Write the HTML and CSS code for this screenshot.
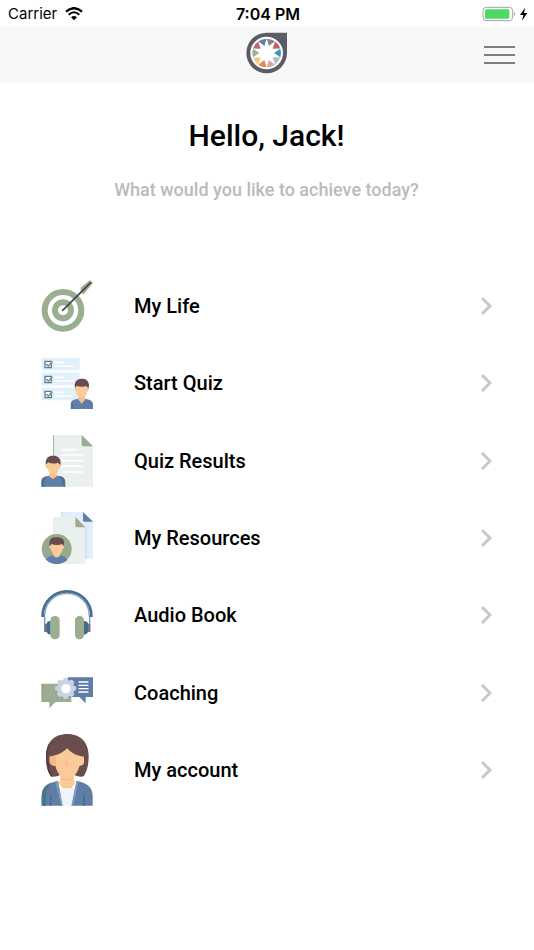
FILE: index.html
```html
<!DOCTYPE html>
<html lang="en">
<head>
<meta charset="utf-8">
<meta name="viewport" content="width=device-width, initial-scale=1">
<title>Home</title>
<link rel="stylesheet" href="styles.css">
</head>
<body>
<div class="status">
  <div class="status-left">
    <span>Carrier</span>
    <svg width="18" height="14" viewBox="0 0 54 42" aria-hidden="true"><path d="M3 14Q27-7 51 14" fill="none" stroke="#000" stroke-width="7"/><path d="M11 23Q27 9 43 23" fill="none" stroke="#000" stroke-width="6"/><path d="M18 31Q27 23 36 31L27 40z"/></svg>
  </div>
  <time class="clock">7:04 PM</time>
  <div class="status-right">
    <svg width="46" height="16" viewBox="0 0 138 48" aria-hidden="true"><rect x="3" y="4" width="89" height="40" rx="10" fill="#fff" stroke="#a2a2a4" stroke-width="3"/><rect x="9" y="10" width="73" height="28" rx="3" fill="#4cd964"/><path d="M97 18q6 6 0 12z" fill="#8e8e93"/><path d="M129 5L114 27h10l-4 17 16-23h-10z"/></svg>
  </div>
</div>
<header class="bar">
  <a class="logo" href="#" aria-label="Home">
    <svg width="42" height="42" viewBox="0 0 126 126" aria-hidden="true">
      <path d="M62 2h61v61A61 61 0 1 1 62 2z" fill="#5c5c68"/>
      <circle cx="62" cy="63" r="49" fill="#fff"/>
      <g transform="translate(62 63)">
        <path d="M22 0L41-13Q45 0 41 13z" fill="#2b9fbc"/>
        <path d="M22 0L41-13Q45 0 41 13z" fill="#b9bbbc" transform="rotate(36)"/>
        <path d="M22 0L41-13Q45 0 41 13z" fill="#dfa0ac" transform="rotate(72)"/>
        <path d="M22 0L41-13Q45 0 41 13z" fill="#e9874e" transform="rotate(108)"/>
        <path d="M22 0L41-13Q45 0 41 13z" fill="#fbc778" transform="rotate(144)"/>
        <path d="M22 0L41-13Q45 0 41 13z" fill="#9db397" transform="rotate(180)"/>
        <path d="M22 0L41-13Q45 0 41 13z" fill="#b76a7c" transform="rotate(216)"/>
        <path d="M22 0L41-13Q45 0 41 13z" fill="#5f7ea9" transform="rotate(252)"/>
        <path d="M22 0L41-13Q45 0 41 13z" fill="#85868b" transform="rotate(288)"/>
        <path d="M22 0L41-13Q45 0 41 13z" fill="#cb5962" transform="rotate(324)"/>
      </g>
    </svg>
  </a>
  <button class="menu-button" type="button" aria-label="Menu"><span class="line"></span><span class="line"></span><span class="line"></span></button>
</header>
<main class="content">
  <h1 class="title">Hello, Jack!</h1>
  <p class="subtitle">What would you like to achieve today?</p>
  <nav class="menu">
    <a class="item" href="#">
      <svg class="icon" viewBox="33 30 156 156" aria-hidden="true"><g fill="none" stroke="#9aae90"><circle cx="99" cy="121" r="55" stroke-width="18"/><circle cx="99" cy="121" r="24" stroke-width="18"/></g><path d="M152 70V53l29-24 1 7 7-1-3 8-24 28z" fill="#9aae90"/><path d="M98 121L182 38" stroke="#45434f" stroke-width="5" stroke-linecap="round"/></svg>
      <span class="label">My Life</span>
      <svg class="chevron" viewBox="0 0 12 20" aria-hidden="true"><path d="M2 2l8 8-8 8"/></svg>
    </a>
    <a class="item" href="#">
      <svg class="icon" viewBox="33 22 156 156" aria-hidden="true"><g fill="#e1f0fa"><path d="M35 24h114v38H35zM35 69h114v38H35zM35 114h114v38H35z"/></g><path d="M45 35h19v19H45zM45 80h19v19H45zM45 125h19v19H45z" fill="#fff" stroke="#5d7ba4" stroke-width="4"/><path d="M75 38h28M75 49h55M75 83h28M75 94h55M75 128h28M75 139h49" stroke="#fff" stroke-width="5" stroke-linecap="round"/><path d="M49 43l6 7 12-14M49 88l6 7 12-14M49 133l6 7 12-14" fill="none" stroke="#829b79" stroke-width="5"/><path d="M122 178v-12c0-11 5-15 16-17l17-3 17 3c11 2 17 7 17 17v12z" fill="#607ea8"/><path d="M127 178v-14" stroke="#416b8b" stroke-width="4"/><path d="M145 137h20v13l-10 12-10-12z" fill="#f4bf8b"/><path d="M134 109c0-16 9-22 22-22 14 0 21 8 21 22l-3 14h-37z" fill="#674b4e"/><path d="M134 114q5-2 6-6 14 6 29 1 2 5 7 6-1 8-4 10-3 20-17 20t-17-20q-4-4-4-11z" fill="#facb98"/></svg>
      <span class="label">Start Quiz</span>
      <svg class="chevron" viewBox="0 0 12 20" aria-hidden="true"><path d="M2 2l8 8-8 8"/></svg>
    </a>
    <a class="item" href="#">
      <svg class="icon" viewBox="33 24 156 156" aria-hidden="true"><path d="M69 24h86l34 34v121H69z" fill="#eaf0ee"/><path d="M69 24h3v90h-3z" fill="#a5b59f"/><path d="M155 24l34 34h-29q-5 0-5-5z" fill="#9bad91"/><path d="M97 68h42M97 84h62M97 101h62M97 118h62M101 135h58" stroke="#fff" stroke-width="5" stroke-linecap="round"/><path d="M34 179v-14c0-12 7-16 19-18l16-3 18 3c12 2 19 7 19 18v14z" fill="#607ea8"/><path d="M35 179v-14q0-14 14-17-6 5-6 14v17zM96 165q0-12-9-18 17 1 18 18v14h-4z" fill="#49758a"/><path d="M58 134h22v15l-11 7-11-7z" fill="#f4bf8b"/><path d="M47 109c0-16 8-23 22-23s23 7 23 23l-2 12H48z" fill="#674b4e"/><path d="M47 112q6-2 7-6 15 7 30 1 2 5 8 6-1 7-5 10-4 20-17 20-13 0-18-20-4-3-5-11z" fill="#facb98"/></svg>
      <span class="label">Quiz Results</span>
      <svg class="chevron" viewBox="0 0 12 20" aria-hidden="true"><path d="M2 2l8 8-8 8"/></svg>
    </a>
    <a class="item" href="#">
      <svg class="icon" viewBox="33 25 156 156" aria-hidden="true"><path d="M94 25h65l30 29v111H94z" fill="#e1effc"/><path d="M94 25h3v15h-3z" fill="#bfd0e5"/><path d="M159 25l30 29h-26q-4 0-4-4z" fill="#627eaa"/><path d="M165 68h5v97h-5z" fill="#c9dced"/><path d="M69 40h67l30 31v111H69z" fill="#eaf0ee"/><path d="M136 40l30 31h-26q-4 0-4-4z" fill="#9bad91"/><circle cx="80" cy="136" r="45" fill="#96aa8d"/><path d="M48 168c3-9 14-11 25-13h14c12 2 22 4 25 14q-13 12-32 12-18 0-32-13z" fill="#607ea8"/><path d="M70 142h20v15q-10 9-20 0z" fill="#f4bf8b"/><path d="M58 122c0-17 8-22 23-21 15 0 23 6 21 22l-3 9H61z" fill="#674b4e"/><path d="M57 128q7-2 7-7 17 6 33 0 1 6 6 7-1 7-5 9-4 20-18 20-13 0-17-20-5-2-6-9z" fill="#facb98"/></svg>
      <span class="label">My Resources</span>
      <svg class="chevron" viewBox="0 0 12 20" aria-hidden="true"><path d="M2 2l8 8-8 8"/></svg>
    </a>
    <a class="item" href="#">
      <svg class="icon" viewBox="33 23 156 156" aria-hidden="true"><path d="M44 107v43M179 107v43" stroke="#7d98b4" stroke-width="4"/><path d="M43 127h12v25H43zM168 127h13v25h-13z" fill="#77777d"/><path d="M38 107v-4a73 73 0 0 1 146 0v4" fill="none" stroke="#426f93" stroke-width="8"/><path d="M44 107v-4a67 67 0 0 1 134 0v4" fill="none" stroke="#8099ba" stroke-width="4"/><path d="M62 119q-12 0-12 10v20q0 10 12 11zM161 119q13 0 13 10v20q0 10-13 11z" fill="#41698e"/><rect x="61" y="104" width="28" height="70" rx="13" fill="#9bae91"/><rect x="135" y="104" width="27" height="70" rx="13" fill="#9bae91"/></svg>
      <span class="label">Audio Book</span>
      <svg class="chevron" viewBox="0 0 12 20" aria-hidden="true"><path d="M2 2l8 8-8 8"/></svg>
    </a>
    <a class="item" href="#">
      <svg class="icon icon-short" viewBox="33 36 156 96" aria-hidden="true"><path d="M35 56h89v55H76l-18 19v-19H35z" fill="#9aad91"/><path d="M35 56h3v55h-3z" fill="#839e7a"/><path d="M113 37h76v59h-22v19l-19-19h-35z" fill="#607da8"/><path d="M147 51h27M147 61h27M147 71h27M147 81h27" stroke="#fff" stroke-width="4" stroke-linecap="round"/><g stroke="#c9d3e4" stroke-width="16" stroke-linecap="round"><path d="M107 46v48M83 70h48M90 53l34 34M90 87l34-34"/></g><circle cx="107" cy="70" r="26" fill="#c9d3e4"/><circle cx="108" cy="71" r="14" fill="#fff"/></svg>
      <span class="label">Coaching</span>
      <svg class="chevron" viewBox="0 0 12 20" aria-hidden="true"><path d="M2 2l8 8-8 8"/></svg>
    </a>
    <a class="item" href="#">
      <svg class="icon icon-tall" viewBox="33 19 156 216" aria-hidden="true"><path d="M112 19c-42 0-64 27-64 67 0 25 4 45 14 60 12 3 23-1 32-6h36c9 5 19 9 31 6 10-15 15-35 15-60 0-41-23-67-64-67z" fill="#6b4c4f"/><path d="M60 43q-12 17-12 43 0 38 14 60l6 1q-13-26-14-61 0-25 6-43z" fill="#5b3f43"/><path d="M92 138h39v25l-7 20H99l-7-20z" fill="#f5be88"/><path d="M80 181h62v53H80z" fill="#f0f3fa"/><path d="M35 234v-28c0-32 22-40 49-47l13 75zM188 234v-28c0-32-20-40-48-47l-14 75z" fill="#607da5"/><path d="M35 234v-28q0-33 31-42-18 12-18 42v28z" fill="#47758d"/><path d="M62 203v31M162 203v31" stroke="#42698f" stroke-width="4" stroke-linecap="round"/><path d="M84 160l14 74h-5l-17-72zM139 160l-15 74h5l17-71z" fill="#7c9abd"/><path d="M88 158h46v10q-5 14-23 14-18 0-23-14z" fill="#facb98"/><path d="M59 87c20-3 38-10 52-25 15 16 31 23 51 25v18q-2 9-13 9-7 24-24 37-13 7-27-1-16-11-22-36-14 1-17-10z" fill="#facb98"/><path d="M59 87q11-1 20-5-2 16 1 32-18 2-21-10z" fill="#f4bb83"/><path d="M108 98v14h7" fill="none" stroke="#eab37d" stroke-width="3"/></svg>
      <span class="label">My account</span>
      <svg class="chevron" viewBox="0 0 12 20" aria-hidden="true"><path d="M2 2l8 8-8 8"/></svg>
    </a>
  </nav>
</main>
</body>
</html>
```
FILE: styles.css
```css
* {
  box-sizing: border-box;
}

body {
  margin: 0;
  background: #fff;
  color: #000;
  font-family: Roboto, "Liberation Sans", sans-serif;
}

svg {
  display: block;
}

.status,
.bar {
  display: grid;
  grid-template-columns: 1fr auto 1fr;
  align-items: center;
}

.status {
  height: 26px;
  padding: 0 6px 0 8px;
  font-family: Inter, "Liberation Sans", sans-serif;
  font-size: 15px;
  line-height: 28px;
}

.status-left {
  display: flex;
  align-items: center;
  gap: 8px;
}

.clock {
  font-size: 16px;
  font-weight: 600;
}

.status-right {
  justify-self: end;
}

.bar {
  height: 57px;
  padding: 0 19px;
  background: #f8f8f8;
}

.logo {
  grid-column: 2;
  align-self: start;
  padding-top: 6px;
}

.menu-button {
  display: grid;
  gap: 6px;
  justify-self: end;
  width: 31px;
  padding: 0;
  border: 0;
  background: none;
}

.line {
  height: 2px;
  background: #7f7e84;
}

.content {
  padding: 33px 42px 32px 41px;
}

.title {
  margin: 0;
  font-size: 30px;
  font-weight: 500;
  line-height: 40px;
  text-align: center;
}

.subtitle {
  margin: 21px 0 0;
  color: #b9bbba;
  font-size: 18px;
  font-weight: 500;
  line-height: 26px;
  text-align: center;
}

.menu {
  display: grid;
  grid-auto-rows: 1fr;
  min-height: 542px;
  margin-top: 64px;
}

.item {
  display: flex;
  align-items: center;
  color: inherit;
  text-decoration: none;
}

.icon {
  flex: none;
  width: 52px;
  height: 52px;
}

.icon-short {
  height: 32px;
}

.icon-tall {
  height: 72px;
}

.label {
  flex: 1;
  margin-left: 41px;
  font-size: 20px;
  font-weight: 500;
  line-height: 28px;
}

.chevron {
  width: 12px;
  height: 20px;
  fill: none;
  stroke: #c7c7cc;
  stroke-width: 3;
}
```
